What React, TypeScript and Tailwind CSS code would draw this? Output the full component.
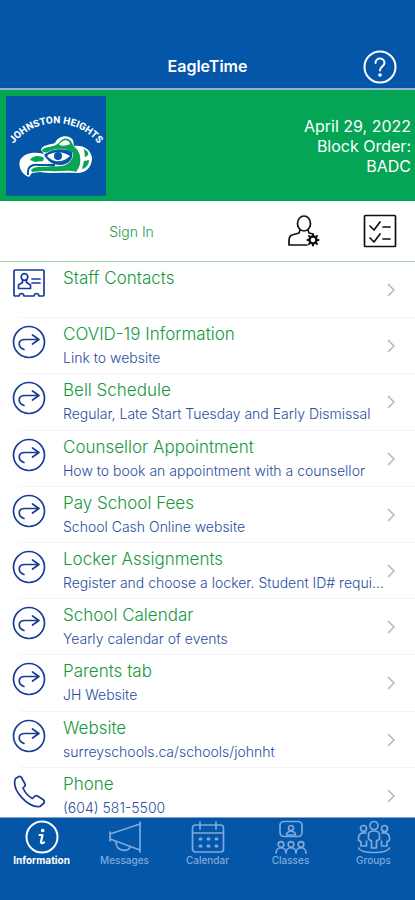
import type { ReactNode } from "react";

type IconName = "contacts" | "link" | "phone";

const rows: { title: string; detail?: string; icon: IconName }[] = [
  { title: "Staff Contacts", icon: "contacts" },
  { title: "COVID-19 Information", detail: "Link to website", icon: "link" },
  { title: "Bell Schedule", detail: "Regular, Late Start Tuesday and Early Dismissal", icon: "link" },
  { title: "Counsellor Appointment", detail: "How to book an appointment with a counsellor", icon: "link" },
  { title: "Pay School Fees", detail: "School Cash Online website", icon: "link" },
  { title: "Locker Assignments", detail: "Register and choose a locker. Student ID# required", icon: "link" },
  { title: "School Calendar", detail: "Yearly calendar of events", icon: "link" },
  { title: "Parents tab", detail: "JH Website", icon: "link" },
  { title: "Website", detail: "surreyschools.ca/schools/johnht", icon: "link" },
  { title: "Phone", detail: "(604) 581-5500", icon: "phone" },
];

function Logo() {
  return (
    <svg viewBox="0 0 100 100" className="size-25 shrink-0 bg-[#0456a8]" role="img" aria-label="Johnston Heights">
      <path id="arc" d="M4 53A54 54 0 0 1 96 53" fill="none" />
      <text fill="#fff" fontSize="10" fontWeight="800" fontFamily="Roboto,'Liberation Sans',sans-serif">
        <textPath href="#arc" startOffset="50%" textAnchor="middle">JOHNSTON HEIGHTS</textPath>
      </text>
      <path d="M35 54C36 49 43 49 49 47C52 39 63 38 67 44L68 50C78 49 85 54 86 62C86 71 80 77 71 77C57 76 47 78 34 76L26 77L23 81C15 78 12 70 14 64C18 57 28 55 38 58Z" fill="#fff" />
      <path d="M36 54C39 50 47 52 53 47C56 41 64 41 66 47C68 52 73 53 74 60C75 66 74 71 70 76C60 73 51 77 38 74L49 71L54 70C63 70 68 62 67 57C60 51 48 52 42 56C39 57 36 56 36 54Z" fill="#0aa552" />
      <path d="M53 49C56 43 63 43 64 48C60 50 57 50 53 49Z" fill="#fff" />
      <path d="M24 64C26 59 35 59 38 62L37 65L29 66Z" fill="#0aa552" />
      <path d="M25 74C29 69 38 72 46 70L55 71L52 75L36 75L26 76Z" fill="#0aa552" />
      <path d="M22 79C21 71 25 68 33 69L49 69" stroke="#0456a8" strokeWidth="2" fill="none" />
      <path d="M38 59C46 52 60 52 66 56C68 62 63 69 54 69C46 69 42 65 38 59Z" fill="#0456a8" />
      <path d="M41 60C48 54 58 56 64 60C57 67 47 67 41 60Z" fill="#fff" />
      <circle cx="52" cy="60" r="4" fill="#0456a8" />
      <path d="M78 53C83 55 84 60 79 61ZM78 65L83 64C83 69 80 72 76 73Z" fill="#0aa552" />
    </svg>
  );
}

function Stroke({ className, width = 1.5, children }: { className: string; width?: number; children: ReactNode }) {
  return (
    <svg viewBox="0 0 34 34" className={className} fill="none" stroke="currentColor" strokeWidth={width} strokeLinecap="round" strokeLinejoin="round" aria-hidden="true">
      {children}
    </svg>
  );
}

function RowIcon({ name }: { name: IconName }) {
  return (
    <Stroke className="size-[34px] shrink-0 text-[#1a3c98]" width={1.7}>
      {name === "link" && (
        <>
          <circle cx="17" cy="17" r="15.500" />
          <path d="M12 24.500C6 22.500 5 14.500 13 14.500H26M20.500 10L27 14.500L20.500 19" />
        </>
      )}
      {name === "contacts" && (
        <>
          <path d="M3 1H31Q32 1 32 2V26Q32 27 31 27H27Q26.500 24.500 24.500 24.500T22 27H12Q11.500 24.500 9.500 24.500T7 27H3Q2 27 2 26V2Q2 1 3 1Z" />
          <circle cx="12.500" cy="8" r="3.300" />
          <path d="M10.500 11V13.500L6.500 16V19.500H18.500V16L14.500 13.500V11M20 10H28M20 14H28" />
        </>
      )}
      {name === "phone" && (
        <path d="M7 1.500L3.500 3.500C-1 15 16 33 28 31.500L32 28Q33 26 31 24.500L25.500 21Q23.500 20 22 22L20.500 23.500Q14 20 11 13L12.500 11.500Q14 10 12.500 8L9.500 2.500Q8.500 1 7 1.500Z" />
      )}
    </Stroke>
  );
}

const tabs: { label: string; icon: ReactNode }[] = [
  {
    label: "Information",
    icon: (
      <>
        <circle cx="17" cy="17" r="15.500" strokeWidth="2" />
        <path d="M14.500 15H17.500L16 22Q16 24 19 22.500" strokeWidth="2.200" />
        <circle cx="17.700" cy="10.500" r="1" fill="currentColor" />
      </>
    ),
  },
  {
    label: "Messages",
    icon: (
      <>
        <path d="M2 12V21M2 14L32 4V30L2 19M32 2V32" />
        <path d="M8 22C8 32 21 32 22 27" />
      </>
    ),
  },
  {
    label: "Calendar",
    icon: (
      <>
        <rect x="1.500" y="5" width="31" height="27" rx="3" />
        <path d="M2 13H32M9 2V9M25 2V9" />
        <path d="M9 19H10M17 19H18M25 19H26M9 26H10M17 26H18M25 26H26" strokeWidth="3" />
      </>
    ),
  },
  {
    label: "Classes",
    icon: (
      <>
        <rect x="6" y="1.500" width="22" height="15" rx="4" />
        <circle cx="17" cy="8" r="2.500" />
        <path d="M12.500 15C13 10 21 10 21.500 15Z" />
        <circle cx="7" cy="24.500" r="2.800" />
        <circle cx="17" cy="24.500" r="2.800" />
        <circle cx="27" cy="24.500" r="2.800" />
        <path d="M2 33C2 26 12 26 12 33C12 26 22 26 22 33C22 26 32 26 32 33" />
      </>
    ),
  },
  {
    label: "Groups",
    icon: (
      <>
        <circle cx="17" cy="5.500" r="4" />
        <circle cx="6.500" cy="8.500" r="3" />
        <circle cx="27.500" cy="8.500" r="3" />
        <path d="M14.500 28V21L11.500 19V15Q11.500 11 17 11T22.500 15V19L19.500 21V28ZM9 13Q1.500 12 1.500 18V20L4 22V26H9.500V21M25 13Q32.500 12 32.500 18V20L30 22V26H24.500V21" />
        <path d="M1.500 28C4 34 30 34 32.500 28" />
      </>
    ),
  },
];

export default function App() {
  return (
    <div className="flex h-screen flex-col bg-white font-[Inter,'Liberation_Sans',sans-serif]">
      <header className="grid h-[90px] shrink-0 grid-cols-[1fr_auto_1fr] items-end border-b-2 border-[#8fb6cf] bg-[#0456a8] px-[18px] pb-1 text-white">
        <h1 className="col-start-2 pb-2 text-base leading-5 font-semibold">EagleTime</h1>
        <button type="button" aria-label="Help" className="justify-self-end">
          <Stroke className="size-[34px]" width={2}>
            <circle cx="17" cy="17" r="15.500" />
            <path d="M12.500 13C12.500 7 21.500 7 21.500 13C21.500 16 17 16.500 17 20.500" />
            <circle cx="17" cy="25" r="0.800" fill="currentColor" />
          </Stroke>
        </button>
      </header>

      <section className="flex h-[111px] shrink-0 items-center justify-between bg-[#04a655] pr-1 pl-1.5">
        <Logo />
        <p className="text-right text-base leading-5 text-white">
          April 29, 2022
          <br />
          Block Order:
          <br />
          BADC
        </p>
      </section>

      <nav className="flex h-[61px] shrink-0 items-center border-b border-b-[#9fd3aa] pr-[18px]" aria-label="Account">
        <div className="flex-1 pr-6 text-center">
          <button type="button" className="text-sm font-light text-[#279c50]">Sign In</button>
        </div>
        <div className="flex gap-[42px] text-[#111]">
          <button type="button" aria-label="Account settings">
            <Stroke className="size-[34px]" width={1.7}>
              <ellipse cx="17" cy="9.500" rx="6.500" ry="7.500" />
              <path d="M13 16L12 19L5 21Q2 22 2 27V31H20M21 16L22 19L26 20" />
              <circle cx="26" cy="26" r="3.500" strokeWidth="2.500" />
              <path d="M26 20.500V22M26 30V31.500M20.500 26H22M30 26H31.500M22 22L23 23M29 29L30 30M30 22L29 23M23 29L22 30" strokeWidth="2" />
            </Stroke>
          </button>
          <button type="button" aria-label="Checklist">
            <Stroke className="size-[34px]" width={1.7}>
              <rect x="1.500" y="1.500" width="31" height="31" rx="1" />
              <path d="M7 12L11 16L17 8M20 13H27M7 24L11 28L17 20M20 25H27" />
            </Stroke>
          </button>
        </div>
      </nav>

      <main className="min-h-0 flex-1 overflow-y-auto [scrollbar-width:none]">
        <ul className="grid h-[562px] grid-rows-10">
          {rows.map((row) => (
            <li key={row.title} className="relative min-w-0 pl-3 after:absolute after:right-0 after:bottom-0 after:left-5 after:h-px after:bg-[#f3f4f5]">
              <a href="#" className="flex h-full items-start gap-[17px] pr-5">
                <span className="pt-[7px]">
                  <RowIcon name={row.icon} />
                </span>
                <span className="min-w-0 flex-1 pt-1 font-light">
                  <span className="block truncate text-[17px] leading-6 text-[#169840]">{row.title}</span>
                  {row.detail && <span className="block truncate text-sm leading-6 text-[#2a4da0]">{row.detail}</span>}
                </span>
                <svg viewBox="0 0 8 14" className="ml-[-15px] h-3.5 w-2 shrink-0 self-center fill-none stroke-[#b5b5b8] stroke-[1.5]" aria-hidden="true">
                  <path d="M1 1L7 7L1 13" />
                </svg>
              </a>
            </li>
          ))}
        </ul>
      </main>

      <footer className="h-[83px] shrink-0 border-t border-[#7fa3cc] bg-[#0456a8]">
        <nav className="grid grid-cols-5 pt-0.5" aria-label="Sections">
          {tabs.map((tab, i) => (
            <button
              key={tab.label}
              type="button"
              aria-current={i === 0 ? "page" : undefined}
              className={`flex flex-col items-center text-[10px] leading-3 ${i === 0 ? "font-bold text-white" : "font-medium text-[#7fa9dc]"}`}
            >
              <Stroke className="size-[34px]" width={1.7}>
                {tab.icon}
              </Stroke>
              {tab.label}
            </button>
          ))}
        </nav>
      </footer>
    </div>
  );
}
